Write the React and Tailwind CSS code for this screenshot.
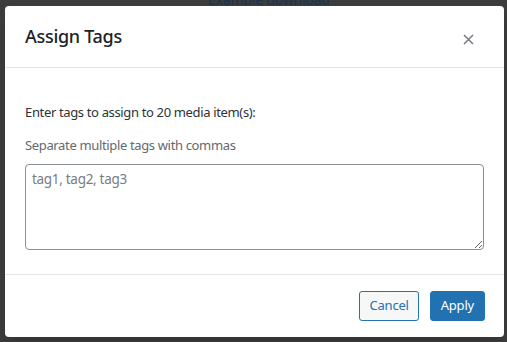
import React from 'react';

export default function App() {
    return (
        <div className="relative w-[507px] h-[342px] overflow-hidden bg-[#3c3c3c]" style={{ fontFamily: '"Noto Sans", "Open Sans", sans-serif' }}>
            {/* page behind the overlay */}
            <div className="absolute left-[208px] top-[-10px] text-[14px] leading-[20px] text-[#1b344d] tracking-[-0.2px]">
                Example download
            </div>

            <div className="relative ml-[5px] mt-[6px] w-[499px] h-[331px] bg-white rounded-[4px] shadow-lg flex flex-col">
                <div className="h-[62px] px-[20px] flex items-center justify-between border-b border-[#e5e5e5]">
                    <h2 className="text-[18px] font-medium text-[#1d2327] tracking-[-0.3px]">Assign Tags</h2>
                    <button className="w-[20px] h-[20px] mr-[6px] mt-[6px] flex items-center justify-center text-[#787c82]">
                        <svg width="11" height="11" viewBox="0 0 11 11" fill="none" stroke="currentColor" strokeWidth="1.5">
                            <path d="M1 1 L10 10 M10 1 L1 10" />
                        </svg>
                    </button>
                </div>

                <div className="flex-1 px-[20px] pt-[34px] border-b border-[#e5e5e5]">
                    <p className="text-[13px] leading-[20px] text-[#2c3338] tracking-[-0.35px]">Enter tags to assign to 20 media item(s):</p>
                    <p className="mt-[13px] text-[13px] leading-[20px] text-[#646970] tracking-[-0.35px]">Separate multiple tags with commas</p>
                    <textarea
                        className="mt-[9px] block w-full h-[86px] px-[6px] py-[4px] border border-[#8c8f94] rounded-[4px] text-[13.5px] tracking-[-0.3px] text-[#2c3338] placeholder-[#787c82] resize-y"
                        placeholder="tag1, tag2, tag3"
                    />
                </div>

                <div className="h-[62px] px-[19px] flex items-center justify-end gap-[11px]">
                    <button className="h-[30px] px-[9px] rounded-[3px] border border-[#2271b1] bg-[#f6f7f7] text-[#2271b1] text-[13px] tracking-[-0.2px]">
                        Cancel
                    </button>
                    <button className="h-[30px] px-[10px] rounded-[3px] border border-[#2271b1] bg-[#2271b1] text-white text-[13px] tracking-[-0.2px]">
                        Apply
                    </button>
                </div>
            </div>
        </div>
    );
}
